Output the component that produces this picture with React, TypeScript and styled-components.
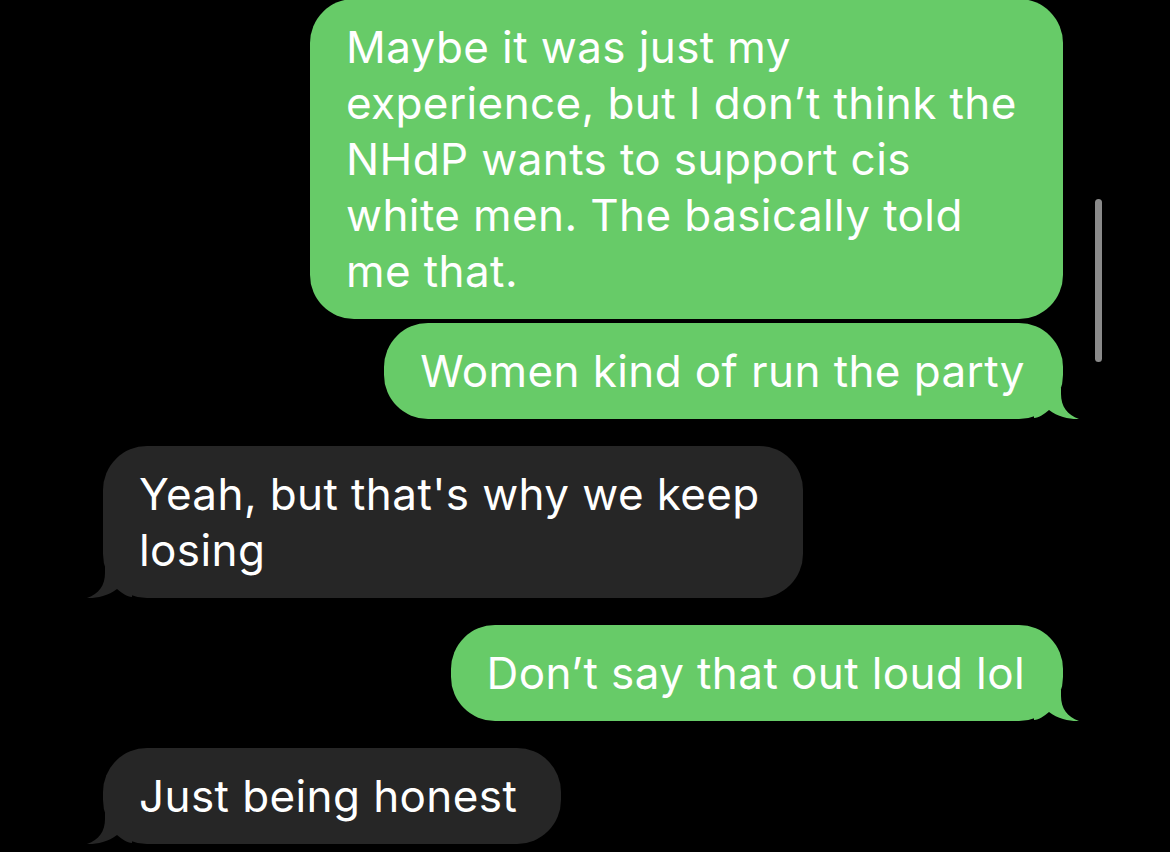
import React from 'react';
import styled, { createGlobalStyle } from 'styled-components';

const GREEN = '#67cb68';
const GREY = '#262626';

const GlobalStyle = createGlobalStyle`
  html, body {
    margin: 0;
    padding: 0;
    background: #000;
  }
`;

const Screen = styled.div`
  position: relative;
  width: 1170px;
  height: 852px;
  overflow: hidden;
  background: #000;
  box-sizing: border-box;
  padding: 0 107px 0 103px;
  display: flex;
  flex-direction: column;
  font-family: Inter, 'Noto Sans', sans-serif;
`;

const Row = styled.div<{ $mine: boolean; $gap: number }>`
  display: flex;
  justify-content: ${(p) => (p.$mine ? 'flex-end' : 'flex-start')};
  margin-top: ${(p) => p.$gap}px;
`;

const Bubble = styled.div<{ $mine: boolean; $width?: number }>`
  position: relative;
  box-sizing: border-box;
  width: ${(p) => (p.$width ? `${p.$width}px` : 'auto')};
  padding: 20px ${(p) => (p.$mine ? 38 : 44)}px 20px 36px;
  border-radius: 44px;
  background: ${(p) => (p.$mine ? GREEN : GREY)};
  color: #fff;
  font-size: 44px;
  line-height: 56px;
  letter-spacing: 0.4px;
  white-space: pre;
`;

const Tail = styled.svg<{ $mine: boolean }>`
  position: absolute;
  bottom: -1px;
  width: 47px;
  height: 32px;
  ${(p) => (p.$mine ? 'right: -18px;' : 'left: -18px; transform: scaleX(-1);')}
`;

const ScrollThumb = styled.div`
  position: absolute;
  left: 1095px;
  top: 199px;
  width: 7px;
  height: 163px;
  border-radius: 4px;
  background: #8a8a8a;
`;

interface Msg {
  text: string;
  mine: boolean;
  gap: number;
  tail: boolean;
  width?: number;
}

const messages: Msg[] = [
  {
    text: 'Maybe it was just my\nexperience, but I don’t think the\nNHdP wants to support cis\nwhite men. The basically told\nme that.',
    mine: true,
    gap: -1,
    tail: false,
    width: 753,
  },
  { text: 'Women kind of run the party', mine: true, gap: 4, tail: true },
  {
    text: 'Yeah, but that\'s why we keep\nlosing',
    mine: false,
    gap: 27,
    tail: true,
    width: 700,
  },
  { text: 'Don’t say that out loud lol', mine: true, gap: 27, tail: true },
  { text: 'Just being honest', mine: false, gap: 27, tail: true },
];

const BubbleTail = ({ mine }: { mine: boolean }) => {
  const fill = mine ? GREEN : GREY;
  return (
    <Tail $mine={mine} viewBox="0 0 47 32">
      <path
        d="M0 0 L27 0 L27 6 C27 18 33 27 45 31 C37 31.5 24 29 15 22 C10 26 5 30 0 30 Z"
        fill={fill}
      />
    </Tail>
  );
};

export default function App() {
  return (
    <Screen>
      <GlobalStyle />
      {messages.map((m, i) => (
        <Row key={i} $mine={m.mine} $gap={m.gap}>
          <Bubble $mine={m.mine} $width={m.width}>
            {m.text}
            {m.tail && <BubbleTail mine={m.mine} />}
          </Bubble>
        </Row>
      ))}
      <ScrollThumb />
    </Screen>
  );
}
